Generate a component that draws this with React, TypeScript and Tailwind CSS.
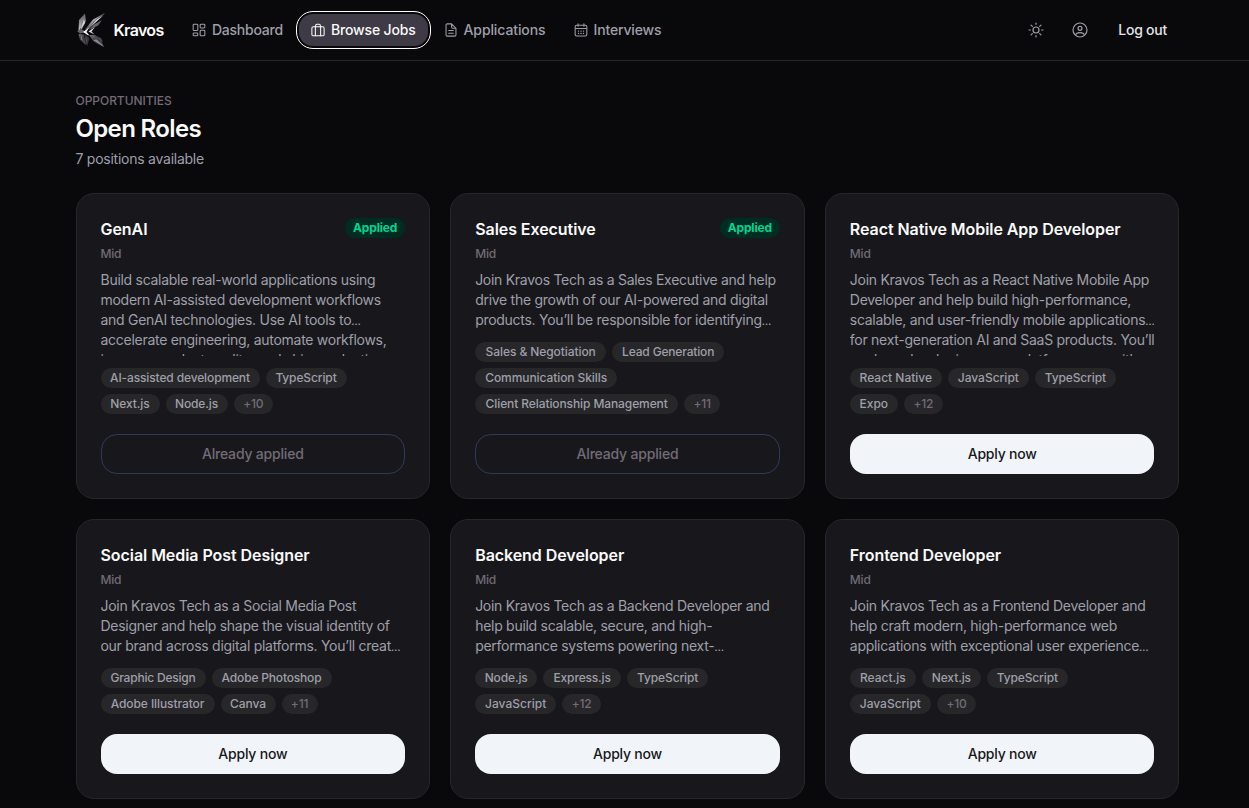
import React from "react";

type Job = {
  title: string;
  applied?: boolean;
  lines: string[];
  tags: string[];
  more: number;
};

const jobs: Job[] = [
  {
    title: "GenAI",
    applied: true,
    lines: [
      "Build scalable real-world applications using",
      "modern AI-assisted development workflows",
      "and GenAI technologies. Use AI tools to…",
      "accelerate engineering, automate workflows,",
      "improve product quality, and ship production",
    ],
    tags: ["AI-assisted development", "TypeScript", "Next.js", "Node.js"],
    more: 10,
  },
  {
    title: "Sales Executive",
    applied: true,
    lines: [
      "Join Kravos Tech as a Sales Executive and help",
      "drive the growth of our AI-powered and digital",
      "products. You’ll be responsible for identifying…",
    ],
    tags: ["Sales & Negotiation", "Lead Generation", "Communication Skills", "Client Relationship Management"],
    more: 11,
  },
  {
    title: "React Native Mobile App Developer",
    lines: [
      "Join Kravos Tech as a React Native Mobile App",
      "Developer and help build high-performance,",
      "scalable, and user-friendly mobile applications…",
      "for next-generation AI and SaaS products. You’ll",
      "work on developing cross-platform apps with",
    ],
    tags: ["React Native", "JavaScript", "TypeScript", "Expo"],
    more: 12,
  },
  {
    title: "Social Media Post Designer",
    lines: [
      "Join Kravos Tech as a Social Media Post",
      "Designer and help shape the visual identity of",
      "our brand across digital platforms. You’ll creat…",
    ],
    tags: ["Graphic Design", "Adobe Photoshop", "Adobe Illustrator", "Canva"],
    more: 11,
  },
  {
    title: "Backend Developer",
    lines: [
      "Join Kravos Tech as a Backend Developer and",
      "help build scalable, secure, and high-",
      "performance systems powering next-…",
    ],
    tags: ["Node.js", "Express.js", "TypeScript", "JavaScript"],
    more: 12,
  },
  {
    title: "Frontend Developer",
    lines: [
      "Join Kravos Tech as a Frontend Developer and",
      "help craft modern, high-performance web",
      "applications with exceptional user experience…",
    ],
    tags: ["React.js", "Next.js", "TypeScript", "JavaScript"],
    more: 10,
  },
];

const tagSize: Record<string, string> = {
  "AI-assisted development": "w-[159px] tracking-[-0.13px]",
  TypeScript: "w-[81px] tracking-[-0.12px]",
  "Next.js": "w-[59px] tracking-[-0.1px]",
  "Node.js": "w-[62px] tracking-[-0.14px]",
  "Sales & Negotiation": "w-[131px] tracking-[-0.08px]",
  "Lead Generation": "w-[112px] tracking-[-0.17px]",
  "Communication Skills": "w-[142px] tracking-[-0.08px]",
  "Client Relationship Management": "w-[203px] tracking-[-0.1px]",
  "React Native": "w-[92px]",
  JavaScript: "w-[81px]",
  Expo: "w-12",
  "Graphic Design": "w-[105px] tracking-[-0.2px]",
  "Adobe Photoshop": "w-[120px] tracking-[-0.18px]",
  "Adobe Illustrator": "w-[114px] tracking-[-0.08px]",
  Canva: "w-[55px] tracking-[-0.05px]",
  "Express.js": "w-[78px] tracking-[-0.16px]",
  "React.js": "w-[66px]",
};

const moreSize: Record<number, string> = {
  10: "w-[39.5px]",
  11: "w-9",
  12: "w-[39px]",
};

function Icon({ className = "size-3.5", children }: { className?: string; children: React.ReactNode }) {
  return (
    <svg viewBox="0 0 24 24" fill="none" stroke="currentColor" strokeWidth="1.8" strokeLinecap="round" strokeLinejoin="round" className={`shrink-0 ${className}`}>
      {children}
    </svg>
  );
}

function Logo() {
  return (
    <svg viewBox="0 0 32 38" className="h-[38px] w-8 shrink-0">
      <defs>
        <linearGradient id="blade" x1="0" y1="0" x2="0" y2="1">
          <stop offset="0" stopColor="#5c565e" />
          <stop offset="0.6" stopColor="#a09aa1" />
          <stop offset="1" stopColor="#dcd8dc" />
        </linearGradient>
        <linearGradient id="arm" x1="1" y1="0" x2="0" y2="1">
          <stop offset="0" stopColor="#6d676e" />
          <stop offset="0.5" stopColor="#b8b3b9" />
          <stop offset="1" stopColor="#4a454c" />
        </linearGradient>
        <linearGradient id="shade" x1="0" y1="0" x2="0.6" y2="1">
          <stop offset="0" stopColor="#75707a" />
          <stop offset="0.6" stopColor="#38343b" />
          <stop offset="1" stopColor="#57525a" />
        </linearGradient>
      </defs>
      <path d="M3 9 9 2.500 8.500 10 2.500 21Z" fill="url(#blade)" />
      <path d="M9 2.500 10 10 5 20 6 11Z" fill="#77717a" />
      <path d="M8 8 9 12 4 20Z" fill="#d3cfd4" />
      <path d="M29 2 17 8.500 9 18.500 13 18Z" fill="url(#arm)" />
      <path d="M29 2 20 10 13 17.500 18 10Z" fill="#4b464e" />
      <path d="M27.500 4.500 20 9 15 15Z" fill="#dcd8dd" />
      <path d="M26 9 18 13.500 13 19 22 14.500Z" fill="#6a646c" />
      <path d="M1 20 6 18.500 10 21 4 22.500Z" fill="#68626b" />
      <path d="M7 21 13 16.500 10.500 21 13.500 24.500 11.500 24Z" fill="#f4f1f4" />
      <path d="M12.500 20.500 19 16 15.500 20.500 18.500 23.500Z" fill="#dedadf" />
      <path d="M2.500 23 8 23.500 10 34 4 29Z" fill="url(#shade)" />
      <path d="M5 24 7 30 5 28.500Z" fill="#88828a" />
      <path d="M9 23.500 13.500 27 11 35.500Z" fill="#3a363d" />
      <path d="M9 25 10.500 29 10.500 34Z" fill="#777179" />
      <path d="M13 24 19 24 25 29 28 36 18 31Z" fill="url(#shade)" />
      <path d="M17 29 28 36 21 28.500Z" fill="#8e8990" />
      <path d="M18 24 25 27 27 31 21 28Z" fill="#4b464e" />
    </svg>
  );
}

function DashboardIcon() {
  return (
    <Icon>
      <rect x="2" y="2" width="8" height="11" rx="1.5" />
      <rect x="14" y="2" width="8" height="6.5" rx="1.5" />
      <rect x="2" y="17" width="8" height="5" rx="1.5" />
      <rect x="14" y="12.500" width="8" height="9.5" rx="1.5" />
    </Icon>
  );
}

function BriefcaseIcon() {
  return (
    <Icon>
      <rect x="1.5" y="6.5" width="21" height="15.500" rx="2.5" />
      <path d="M7.500 6.500V22M16.500 6.500V22M8 6.500V4A2 2 0 0 1 10 2H14A2 2 0 0 1 16 4V6.500" />
    </Icon>
  );
}

function FileIcon() {
  return (
    <Icon>
      <path d="M13 1.500H5.500A2 2 0 0 0 3.500 3.500V20.500A2 2 0 0 0 5.500 22.500H18.500A2 2 0 0 0 20.500 20.500V9L13 1.500ZM13 2V7A2 2 0 0 0 15 9H20M8 17.500H16M8 13H16" />
    </Icon>
  );
}

function CalendarIcon() {
  return (
    <Icon>
      <path d="M17 1.500V5.500M7 1.500V5.500M3 9.500H21" />
      <rect x="2" y="3.800" width="20" height="18.500" rx="2.500" />
      <path d="M7.500 13.800H8M11.800 13.800H12.300M16 13.800H16.500M7.500 17.800H8M11.800 17.800H12.300M16 17.800H16.500" strokeWidth="2" />
    </Icon>
  );
}

function SunIcon() {
  return (
    <Icon className="size-4">
      <circle cx="12" cy="12" r="4.500" />
      <path d="M12 1.500V3.500M12 20.500V22.500M19.400 4.600 17.500 6.500M6.500 17.500 4.600 19.400M22.500 12H20.500M3.500 12H1.500M19.400 19.400 17.500 17.500M6.500 6.500 4.600 4.600" />
    </Icon>
  );
}

function UserIcon() {
  return (
    <Icon className="size-4">
      <circle cx="12" cy="12" r="10.500" />
      <circle cx="12" cy="9.500" r="3" />
      <path d="M5.500 19.500C6 16.500 8 15.800 12 15.800C16 15.800 18 16.500 18.500 19.500" />
    </Icon>
  );
}

function Line({ text }: { text: string }) {
  const clipped = text.endsWith("…");
  return (
    <p className="h-5">
      {clipped ? text.slice(0, -1) : text}
      {clipped && <span className="text-[10px] font-semibold tracking-[-0.5px]">…</span>}
    </p>
  );
}

function JobCard({ job }: { job: Job }) {
  return (
    <article className="flex min-w-0 flex-col rounded-[18px] border border-[#27272a] bg-[#18181c] p-6">
      <div className="flex h-[22px] items-start justify-between">
        <h2 className="whitespace-nowrap text-base font-semibold leading-[22px] tracking-[-0.06px] text-[#fafafa]">{job.title}</h2>
        {job.applied && (
          <span className="flex h-5 w-[60px] shrink-0 items-center justify-center rounded-full bg-[#002c22] text-xs font-bold tracking-[-0.15px] text-[#00d492]">Applied</span>
        )}
      </div>
      <p className="mt-1.5 text-xs font-medium leading-4 tracking-[-0.2px] text-[#736b77]">Mid</p>
      <div className="mt-2 h-[60px] grow overflow-hidden whitespace-nowrap text-sm leading-5 tracking-[-0.28px] text-[#9f9fa9]">
        {job.lines.map((line) => (
          <Line key={line} text={line} />
        ))}
      </div>
      <div className="mt-3 flex shrink-0 flex-wrap gap-1.5 pr-1">
        {job.tags.map((tag) => (
          <span key={tag} className={`h-5 whitespace-nowrap rounded-full bg-[#27272a] text-center text-xs font-medium leading-5 text-[#9f9fa9] ${tagSize[tag]}`}>{tag}</span>
        ))}
        <span className={`h-5 rounded-full bg-[#27272a] text-center text-xs font-medium leading-5 tracking-[-0.2px] text-[#736b77] ${moreSize[job.more]}`}>+{job.more}</span>
      </div>
      {job.applied ? (
        <button className="mt-5 h-10 shrink-0 rounded-2xl border border-[#2f3a5a] text-sm font-medium tracking-[-0.19px] text-[#736b77]">Already applied</button>
      ) : (
        <button className="mt-5 h-10 shrink-0 rounded-2xl bg-[#f1f5f9] text-sm font-medium tracking-[-0.22px] text-[#18181b]">Apply now</button>
      )}
    </article>
  );
}

export default function App() {
  return (
    <div className="h-screen overflow-hidden bg-[#09090b] font-['Inter',sans-serif] text-[#fafafa]">
      <header className="h-[61px] border-b border-[#27272a]">
        <div className="ml-[75.5px] flex h-[60px] w-[1104px] items-center justify-between">
          <div className="flex items-center">
            <Logo />
            <span className="ml-1.5 w-[51px] whitespace-nowrap text-base font-semibold tracking-[-0.65px]">Kravos</span>
            <nav className="ml-[13px] flex items-center whitespace-nowrap text-sm font-medium tracking-[-0.16px] text-[#9f9fa9]">
              <a className="flex h-8 w-[121px] items-center gap-1.5 pl-[14.5px] tracking-[-0.24px]"><DashboardIcon />Dashboard</a>
              <a className="flex h-8 w-[129px] items-center gap-1.5 rounded-[14px] bg-[#3f3b46] pl-[12.5px] text-[#fafafa] outline-[1.5px] outline-offset-2 outline-white"><BriefcaseIcon />Browse Jobs</a>
              <a className="flex h-8 w-[130px] items-center gap-1.5 pl-4 tracking-[-0.1px]"><FileIcon />Applications</a>
              <a className="flex h-8 items-center gap-1.5 pl-4"><CalendarIcon />Interviews</a>
            </nav>
          </div>
          <div className="flex items-center text-[#9f9fa9]">
            <SunIcon />
            <span className="w-7" />
            <UserIcon />
            <span className="w-[30.5px]" />
            <button className="mr-[12.5px] whitespace-nowrap text-sm font-medium tracking-[-0.25px] text-[#e4e4e7]">Log out</button>
          </div>
        </div>
      </header>
      <main className="ml-[75.5px] w-[1104px] pt-8">
        <p className="text-xs font-medium leading-4 tracking-[-0.04px] text-[#736b77]">OPPORTUNITIES</p>
        <h1 className="mt-1 text-2xl font-semibold leading-8 tracking-[-0.65px]">Open Roles</h1>
        <p className="mt-1 text-sm leading-5 tracking-[-0.25px] text-[#9f9fa9]">7 positions available</p>
        <div className="mt-6 grid grid-cols-3 gap-5">
          {jobs.map((job) => (
            <JobCard key={job.title} job={job} />
          ))}
        </div>
      </main>
    </div>
  );
}
